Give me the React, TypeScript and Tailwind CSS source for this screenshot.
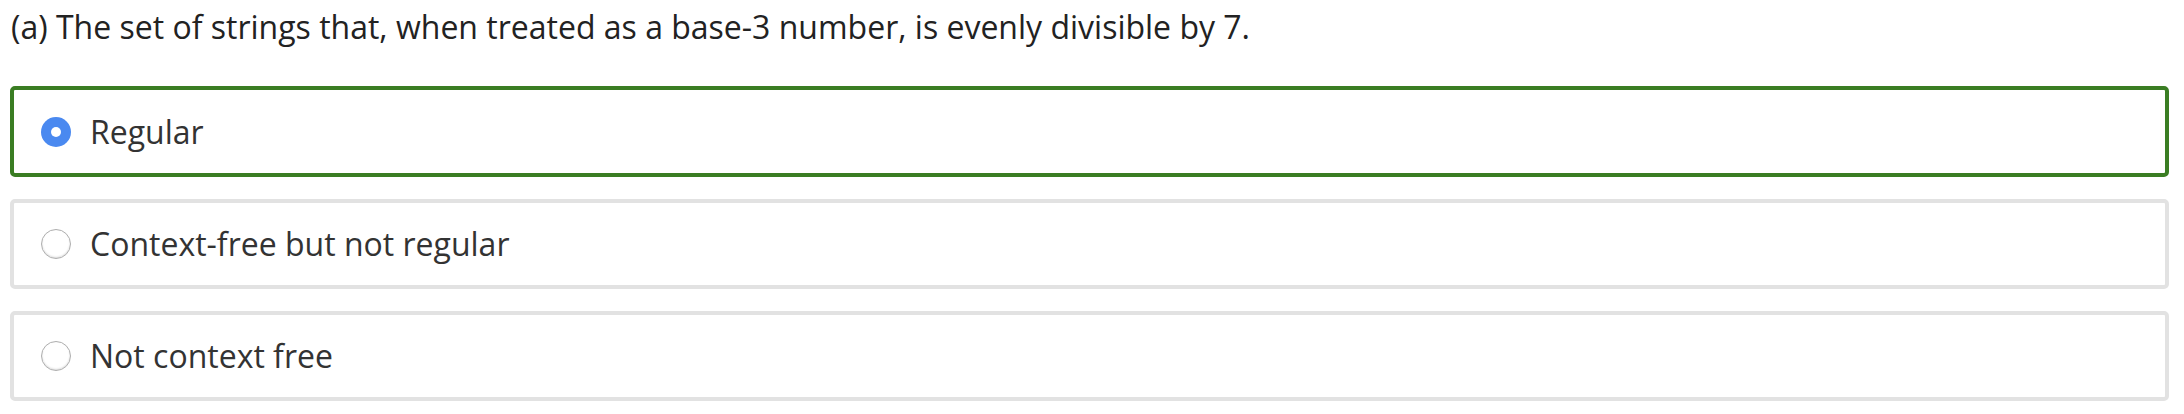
import React from "react";

const options = [
  { label: "Regular", selected: true },
  { label: "Context-free but not regular", selected: false },
  { label: "Not context free", selected: false },
];

const Radio = ({ selected }: { selected: boolean }) =>
  selected ? (
    <span className="flex h-[30px] w-[30px] shrink-0 items-center justify-center rounded-full bg-[#4a89f0]">
      <span className="h-[10px] w-[10px] rounded-full bg-white" />
    </span>
  ) : (
    <span className="h-[30px] w-[30px] shrink-0 rounded-full border-[1.5px] border-[#aeaeae] bg-white shadow-[inset_0_-1px_2px_rgba(0,0,0,0.15)]" />
  );

const App = () => {
  return (
    <div className="w-[2184px] h-[414px] bg-white pl-[10px] pr-[15px] font-['Open_Sans',sans-serif]">
      <h1 className="pl-[1px] pt-[5px] text-[32px] leading-[44px] text-[#222]">
        (a) The set of strings that, when treated as a base-3 number, is evenly divisible by 7.
      </h1>
      <div className="mt-[37px] flex flex-col gap-[22px]">
        {options.map((o) => (
          <div
            key={o.label}
            className={
              o.selected
                ? "flex h-[91px] items-center gap-[19px] rounded-[5px] border-4 border-[#3a7d23] pl-[27px]"
                : "flex h-[90px] items-center gap-[19px] rounded-[5px] border-4 border-[#e2e2e2] pl-[27px]"
            }
          >
            <Radio selected={o.selected} />
            <span className="text-[32px] text-[#333]">{o.label}</span>
          </div>
        ))}
      </div>
    </div>
  );
};

export default App;
